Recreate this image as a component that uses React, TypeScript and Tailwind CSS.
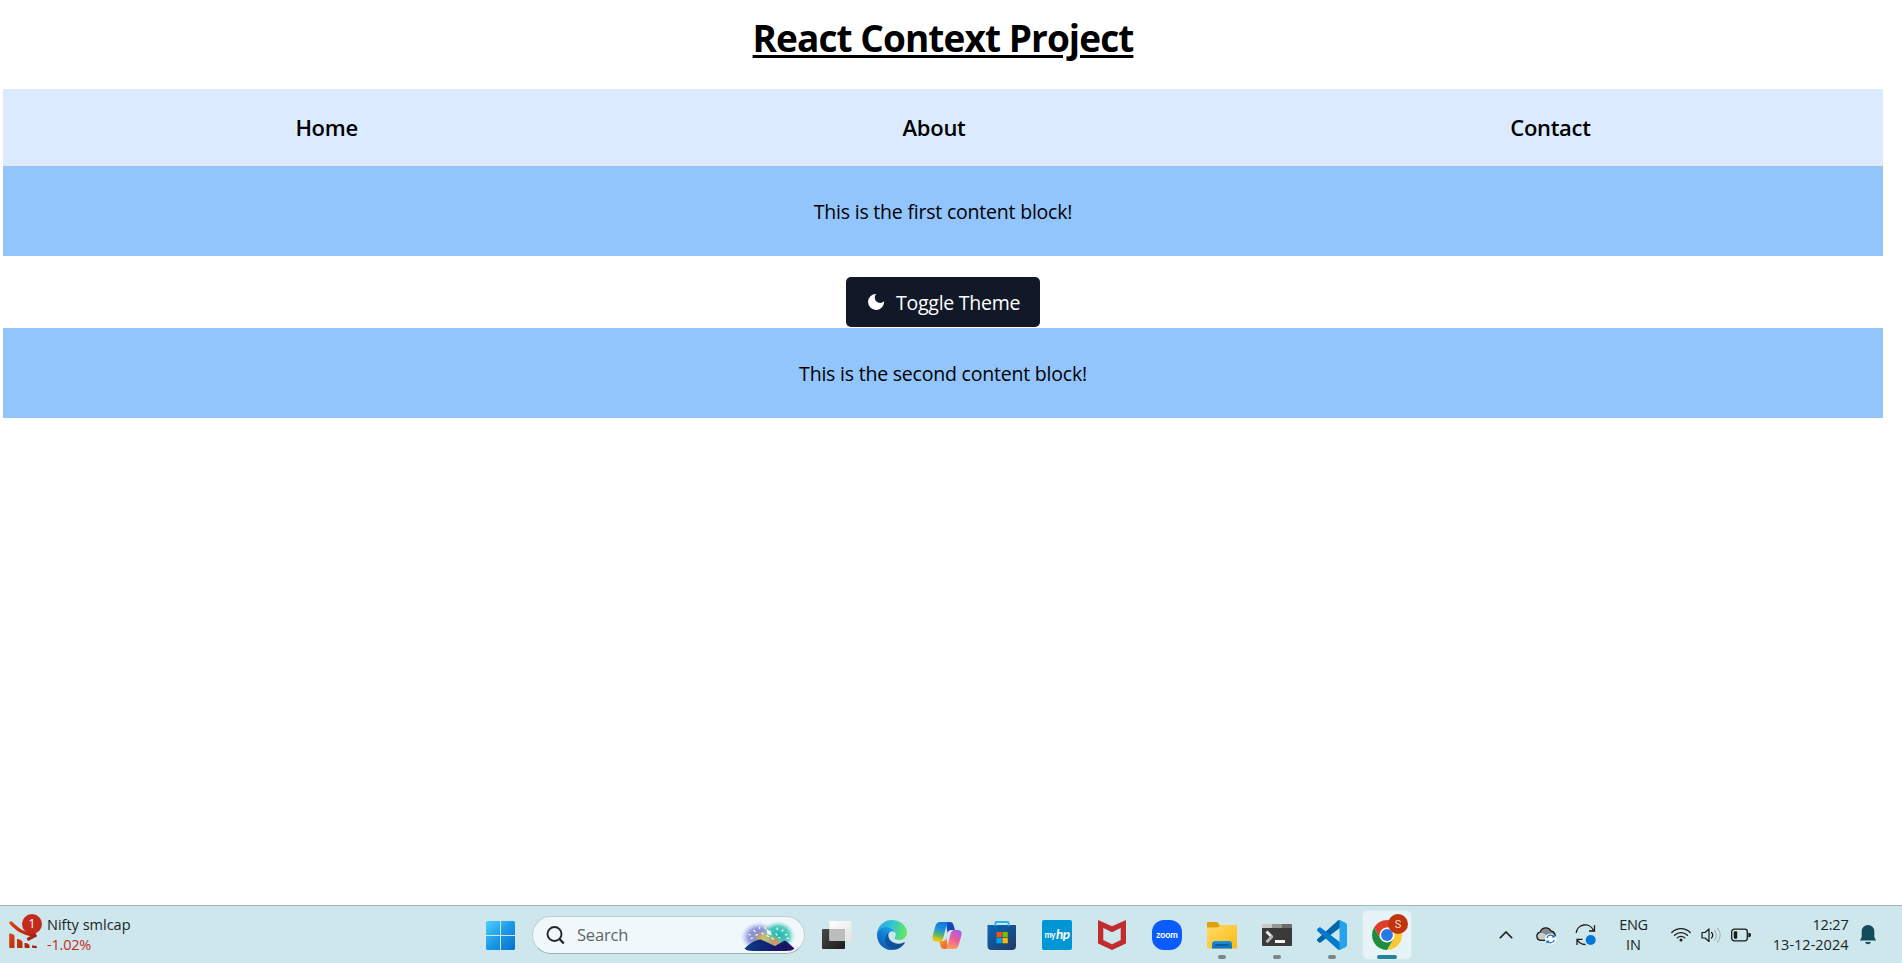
import type { ReactNode } from "react";

const NAV = ["Home", "About", "Contact"];

function ContentBlock({ children }: { children: ReactNode }) {
  return (
    <div className="flex h-[90px] items-center justify-center bg-[#93c5fd] pt-px text-[19.500px] leading-[30px] tracking-[-0.210px] text-black">
      {children}
    </div>
  );
}

function MoonIcon() {
  return (
    <svg width="16" height="16" viewBox="0 0 16 16">
      <path d="M8.200 0A8 8 0 1 0 16 7.300 5.300 5.300 0 0 1 8.200 0z" fill="currentColor" />
    </svg>
  );
}

function TrendIcon() {
  return (
    <svg width="30" height="32" viewBox="0 0 30 32">
      <defs>
        <linearGradient id="trend" x1="0" y1="0" x2="1" y2="0.6">
          <stop offset="0" stopColor="#e0420c" />
          <stop offset="1" stopColor="#a5240f" />
        </linearGradient>
      </defs>
      <path d="M2 4C9 11 14 14.500 25 16.300M19.500 20l6.500-3.500L23 11" fill="none" stroke="url(#trend)" strokeWidth="3.200" strokeLinecap="round" />
      <path d="M.2 14.500q2.800-.5 5.300 2V29H1.200q-1 0-1-1zM8 20q3-.5 5.500 2.500V29H9q-1 0-1-1zM15.500 24q3-.5 5 2V29h-4q-1 0-1-1zM23 26.500q3-.5 5 1V29h-4q-1 0-1-1z" fill="url(#trend)" />
    </svg>
  );
}

function StartIcon() {
  return (
    <svg width="29" height="29" viewBox="0 0 29 29">
      <defs>
        <linearGradient id="start" x1="0" y1="0" x2="1" y2="1">
          <stop offset="0" stopColor="#4fd0fb" />
          <stop offset="0.5" stopColor="#1b9ae6" />
          <stop offset="1" stopColor="#0670cf" />
        </linearGradient>
      </defs>
      <path d="M1 0h13v14H0V1zM15 0h13l1 1v13H15zM0 15h14v14H1l-1-1zM15 15h14v13l-1 1H15z" fill="url(#start)" />
    </svg>
  );
}

function SearchArt() {
  return (
    <svg width="56" height="34" viewBox="0 0 56 34">
      <defs>
        <radialGradient id="glowA">
          <stop offset="0" stopColor="#5f70d0" />
          <stop offset="0.6" stopColor="#858ad9" stopOpacity="0.85" />
          <stop offset="1" stopColor="#a9b3e6" stopOpacity="0" />
        </radialGradient>
        <radialGradient id="glowB">
          <stop offset="0" stopColor="#12b5ab" />
          <stop offset="0.65" stopColor="#35c4b6" stopOpacity="0.85" />
          <stop offset="1" stopColor="#8adfd2" stopOpacity="0" />
        </radialGradient>
        <radialGradient id="glowC">
          <stop offset="0" stopColor="#ff7a4a" />
          <stop offset="1" stopColor="#f0b860" stopOpacity="0" />
        </radialGradient>
        <radialGradient id="glowD">
          <stop offset="0" stopColor="#e6c04a" />
          <stop offset="1" stopColor="#e0c070" stopOpacity="0" />
        </radialGradient>
        <linearGradient id="hill" x1="0" y1="0" x2="1" y2="0">
          <stop offset="0" stopColor="#083f86" />
          <stop offset="0.6" stopColor="#17186c" />
          <stop offset="1" stopColor="#22105f" />
        </linearGradient>
      </defs>
      <ellipse cx="19" cy="19" rx="18" ry="15" fill="url(#glowA)" />
      <ellipse cx="38" cy="18" rx="17" ry="15" fill="url(#glowB)" />
      <ellipse cx="23" cy="20" rx="12" ry="8" fill="url(#glowD)" />
      <ellipse cx="34" cy="24" rx="9" ry="7" fill="url(#glowC)" />
      <path d="M4.500 30.500Q8 27 12 24.500q3-2 5.500-2.500 3-1.300 5 .3l12.500 5.700 8-4.500q2-1.500 3.500 0l8 7q-2 2.500-9 2.500H13q-6.500 0-8.500-2.500z" fill="url(#hill)" />
      <path d="M9 16.500l1.500.5M14 12.500l1 1M19.500 9.500v1.200M25 9l.4 1.500M11 20.500l1.500-.5M16 17l1.500-.4M27 12l1.500 2 2.500 2.500M32 20l1.500 1M37.500 10l-.5 1.500M43 12l-1 1M47 16.500l-1.500.3M48.500 20.500l-1.500-.4M40 20l-1-.6M27 17.500l1.500 1M36 16l1 1M22 15l1 1" fill="none" stroke="#fdf6e0" strokeWidth="1.300" strokeLinecap="round" />
      <circle cx="29" cy="14.500" r="2.200" fill="#fff" opacity=".75" />
    </svg>
  );
}

function TaskViewIcon() {
  return (
    <svg width="30" height="30" viewBox="0 0 30 30">
      <defs>
        <linearGradient id="tvDark" x1="0" y1="0" x2="1" y2="1">
          <stop offset="0" stopColor="#4a4a4a" />
          <stop offset="1" stopColor="#1c1c1c" />
        </linearGradient>
        <linearGradient id="tvLight" x1="0" y1="0" x2="1" y2="1">
          <stop offset="0" stopColor="#fff" />
          <stop offset="1" stopColor="#e2e2e2" />
        </linearGradient>
      </defs>
      <rect x="0" y="9" width="23" height="20" rx="1" fill="url(#tvDark)" />
      <rect x="7.500" y="1" width="22" height="20" rx="1" fill="url(#tvLight)" />
      <path d="M7.500 9H23v12H8.500q-1 0-1-1z" fill="#bdbdbd" />
    </svg>
  );
}

function EdgeIcon() {
  return (
    <svg width="30" height="30" viewBox="0 0 256 256">
      <defs>
        <linearGradient id="edgeA" x1="63" y1="178" x2="242" y2="178" gradientUnits="userSpaceOnUse">
          <stop offset="0" stopColor="#0c59a4" />
          <stop offset="1" stopColor="#114a8b" />
        </linearGradient>
        <linearGradient id="edgeB" x1="137" y1="101" x2="40" y2="220" gradientUnits="userSpaceOnUse">
          <stop offset="0" stopColor="#1b9de2" />
          <stop offset="0.5" stopColor="#0e7fd2" />
          <stop offset="1" stopColor="#0f62b8" />
        </linearGradient>
        <linearGradient id="edgeC" x1="10" y1="60" x2="250" y2="110" gradientUnits="userSpaceOnUse">
          <stop offset="0" stopColor="#2aa8e0" />
          <stop offset="0.45" stopColor="#32c4d4" />
          <stop offset="1" stopColor="#66e95a" />
        </linearGradient>
      </defs>
      <path d="M231 190.500c-3.400 1.800-6.900 3.400-10.500 4.700a101 101 0 0 1-35.800 6.400c-47.200 0-88.300-32.400-88.300-74.200a31.500 31.500 0 0 1 16.400-27.300c-42.700 1.800-53.700 46.300-53.700 72.400 0 73.900 68 81.400 82.700 81.400 7.900 0 19.800-2.300 27-4.600l1.300-.4a128.300 128.300 0 0 0 66.600-52.800 4 4 0 0 0-5.700-5.600z" fill="url(#edgeA)" />
      <path d="M105.700 241.400a79.200 79.200 0 0 1-22.700-21.300 80.700 80.700 0 0 1 29.800-120c3.100-1.500 8.400-4.100 15.500-4a32.400 32.400 0 0 1 25.700 13c-8-33-47-54-82-54C34 55.100 0 88 0 127.500a130 130 0 0 0 12.100 56 128 128 0 0 0 156.400 67.100 75.900 75.900 0 0 1-62.800-9.200z" fill="url(#edgeB)" />
      <path d="M152.300 148.900c-.9 1-3.400 2.500-3.400 5.600 0 2.600 1.700 5.200 4.800 7.300 14.400 10.100 41.700 8.700 41.800 8.700a59.800 59.800 0 0 0 30.300-8.400A61.400 61.400 0 0 0 256 109.300c.3-22.400-8-37.300-11.300-43.900C223.500 23.900 177.700 0 128 0A128 128 0 0 0 0 126.200c.5-36.500 36.800-66 80-66 3.500 0 23.500.3 42 10a72.600 72.600 0 0 1 30.900 29.300c6.100 10.600 7.200 24.100 7.200 29.500s-2.700 13.300-7.800 19.900z" fill="url(#edgeC)" />
    </svg>
  );
}

function CopilotIcon() {
  return (
    <svg width="30" height="29" viewBox="0 0 32 29" preserveAspectRatio="none">
      <defs>
        <linearGradient id="cpA" x1="0.500" y1="0" x2="0.300" y2="1">
          <stop offset="0" stopColor="#0a78e0" />
          <stop offset="0.4" stopColor="#2396d8" />
          <stop offset="0.65" stopColor="#58b665" />
          <stop offset="0.95" stopColor="#f0c808" />
        </linearGradient>
        <linearGradient id="cpB" x1="0.700" y1="0" x2="0.300" y2="1">
          <stop offset="0" stopColor="#a95cf0" />
          <stop offset="0.45" stopColor="#ee5a9c" />
          <stop offset="1" stopColor="#ffa353" />
        </linearGradient>
        <linearGradient id="cpC" x1="0" y1="0" x2="1" y2="1">
          <stop offset="0" stopColor="#0d50c8" />
          <stop offset="1" stopColor="#1b3fa8" />
        </linearGradient>
        <linearGradient id="cpD" x1="0" y1="0" x2="1" y2="1">
          <stop offset="0" stopColor="#f7b21c" />
          <stop offset="1" stopColor="#ee4f4a" />
        </linearGradient>
      </defs>
      <path d="M15 1h4.500q2.500 0 3.300 2.500L24.500 9H20q-2.500 0-3.500 3z" fill="url(#cpC)" />
      <path d="M17 28h-4.500q-2.500 0-3.300-2.500L7.500 20H12q2.500 0 3.500-3z" fill="url(#cpD)" />
      <path d="M8.500 1H18q-1.700.7-2.500 3.500L12 17q-.9 3.400-4 3.400H4.500q-5 0-3.800-5.400L3.600 5Q5 1 8.500 1z" fill="url(#cpA)" />
      <path d="M23.500 28H14q1.700-.7 2.500-3.500L20 12.500Q20.900 9 24 9h3.500q5 0 3.800 5.400L28.400 24Q27 28 23.500 28z" fill="url(#cpB)" />
    </svg>
  );
}

function StoreIcon() {
  return (
    <svg width="30" height="30" viewBox="0 0 30 30">
      <defs>
        <linearGradient id="store" x1="0" y1="0" x2="1" y2="1">
          <stop offset="0" stopColor="#0669bd" />
          <stop offset="1" stopColor="#26375f" />
        </linearGradient>
      </defs>
      <path d="M1 5h27.500q.5 0 .5.500V26q0 4-4 4H4.500q-4 0-4-4V5.500q0-.5.500-.5z" fill="url(#store)" />
      <path d="M8.500 6V2.800q0-.8.800-.8h11.400q.8 0 .8.800V6" fill="none" stroke="#1fb4ee" strokeWidth="1.800" />
      <path d="M9.500 12h5.300v5.300H9.500z" fill="#f25022" />
      <path d="M15.500 12h5.300v5.300h-5.300z" fill="#7fba00" />
      <path d="M9.500 18h5.300v5.300H9.500z" fill="#00a4ef" />
      <path d="M15.500 18h5.300v5.300h-5.300z" fill="#ffb900" />
    </svg>
  );
}

function MyHpIcon() {
  return (
    <div className="flex size-[30px] items-center justify-center rounded-[2px] bg-[#0096d6] font-['Lato'] leading-none text-white">
      <span className="text-[8.500px] font-bold tracking-[-0.500px]">my</span>
      <span className="-mt-px ml-px text-[13.500px] font-bold italic tracking-[-0.600px]">hp</span>
    </div>
  );
}

function McAfeeIcon() {
  return (
    <svg width="28" height="30" viewBox="0 0 28 30">
      <path d="M0 0 14 6.300 28 0V23.500L14 30 0 23.500zM5.300 8V20L14 24.200 22.700 20V8L14 12.200z" fill="#c12c30" fillRule="evenodd" />
    </svg>
  );
}

function ZoomIcon() {
  return (
    <div className="flex size-[30px] items-center justify-center rounded-[12px] bg-[#0b5cff] pb-[2px] font-['Lato'] text-[9px] font-bold leading-none tracking-[-0.1px] text-white">
      zoom
    </div>
  );
}

function FolderIcon() {
  return (
    <svg width="30" height="30" viewBox="0 0 30 30">
      <defs>
        <linearGradient id="folder" x1="0" y1="0" x2="1" y2="1">
          <stop offset="0" stopColor="#ffdc68" />
          <stop offset="1" stopColor="#fdb813" />
        </linearGradient>
        <linearGradient id="folderTab" x1="0" y1="0" x2="0" y2="1">
          <stop offset="0" stopColor="#1e94dc" />
          <stop offset="1" stopColor="#0b6cc0" />
        </linearGradient>
      </defs>
      <path d="M0 3q0-1 1-1h8.500q.8 0 1.300.6L12.500 5H29q1 0 1 1v4H0z" fill="#e0a008" />
      <path d="M0 7.500h9.500q1 0 1.800-.7L12.500 6 13.500 5H29q1 0 1 1v21.500q0 1-1 1H1q-1 0-1-1z" fill="url(#folder)" />
      <path d="M5 28.500V24q0-3 3-3h14q3 0 3 3v4.500z" fill="url(#folderTab)" />
      <path d="M8.500 24.800h13" stroke="#0a4a86" strokeWidth="1.200" strokeLinecap="round" />
    </svg>
  );
}

function TerminalIcon() {
  return (
    <svg width="30" height="30" viewBox="0 0 30 30">
      <path d="M0 8h30v17q0 1-1 1H1q-1 0-1-1z" fill="#3a3a3a" />
      <path d="M1 4h9v4H0V5q0-1 1-1z" fill="#c8c8c8" />
      <path d="M10 4h10v4H10z" fill="#969696" />
      <path d="M20 4h9q1 0 1 1v3H20z" fill="#6c6c6c" />
      <path d="m4.500 11.500 5.500 5.500" stroke="#e8e8e8" strokeWidth="3" fill="none" />
      <path d="m10.500 16-6 6.200" stroke="#b5b5b5" strokeWidth="3" fill="none" />
      <path d="M13 20h10v3H13z" fill="#f5f5f5" />
    </svg>
  );
}

function VsCodeIcon() {
  return (
    <svg width="30" height="30" viewBox="0 0 100 100">
      <path d="M96.500 10.800 75.900.9a6.200 6.200 0 0 0-7.100 1.200L1.300 63.600a4.200 4.200 0 0 0 0 6.100l5.500 5a4.200 4.200 0 0 0 5.300.3L93.300 13.400c2.700-2.100 6.600-.1 6.600 3.300v-.3a6.200 6.200 0 0 0-3.400-5.600z" fill="#0065a9" />
      <path d="M96.500 89.200 75.900 99.100a6.200 6.200 0 0 1-7.100-1.200L1.300 36.400a4.200 4.200 0 0 1 0-6.100l5.500-5a4.200 4.200 0 0 1 5.300-.3l81.200 61.600c2.700 2.100 6.600.1 6.600-3.300v.3a6.200 6.200 0 0 1-3.400 5.600z" fill="#007acc" />
      <path d="M75.900 99.100a6.200 6.200 0 0 1-7.100-1.200c2.300 2.300 6.200.7 6.200-2.600V4.700c0-3.300-3.900-4.900-6.200-2.600A6.200 6.200 0 0 1 75.900.9l20.600 9.900a6.300 6.300 0 0 1 3.500 5.600v67.200a6.300 6.300 0 0 1-3.500 5.600z" fill="#24a4ee" />
    </svg>
  );
}

function ChromeIcon() {
  return (
    <svg width="30" height="30" viewBox="0 0 48 48">
      <path d="M24 12H44.780A24 24 0 0 0 3.220 12L13.610 30z" fill="#e33b2e" />
      <path d="M34.390 30 24 48A24 24 0 0 0 44.780 12H24z" fill="#fcc934" />
      <path d="M13.610 30 3.220 12A24 24 0 0 0 24 48L34.390 30z" fill="#1e8e3e" />
      <circle cx="24" cy="24" r="12" fill="#fff" />
      <circle cx="24" cy="24" r="9.500" fill="#2a78e6" />
    </svg>
  );
}

type TaskbarApp = { name: string; icon: ReactNode; state?: "open" | "active" };

const APPS: TaskbarApp[] = [
  { name: "task-view", icon: <TaskViewIcon /> },
  { name: "edge", icon: <EdgeIcon /> },
  { name: "copilot", icon: <CopilotIcon /> },
  { name: "store", icon: <StoreIcon /> },
  { name: "myhp", icon: <MyHpIcon /> },
  { name: "mcafee", icon: <McAfeeIcon /> },
  { name: "zoom", icon: <ZoomIcon /> },
  { name: "files", icon: <FolderIcon />, state: "open" },
  { name: "terminal", icon: <TerminalIcon />, state: "open" },
  { name: "vscode", icon: <VsCodeIcon />, state: "open" },
  { name: "chrome", icon: <ChromeIcon />, state: "active" },
];

function AppButton({ app }: { app: TaskbarApp }) {
  const active = app.state === "active";
  return (
    <div className="flex w-[55px] shrink-0 justify-center">
      <div
        className={
          active
            ? "relative flex h-[48px] w-[48px] items-center justify-center rounded-[5px] bg-[#e6f3f7] shadow-[0_0_0_1px_rgba(255,255,255,0.2)]"
            : "relative flex h-[48px] w-[48px] items-center justify-center"
        }
      >
        {app.icon}
        {active && (
          <span className="absolute top-[3px] left-[25px] flex size-5 items-center justify-center rounded-full bg-[#bf360c] font-['Roboto'] text-[11px] leading-none text-[#f3d9cf]">
            S
          </span>
        )}
        {app.state === "open" && <span className="absolute bottom-0 left-5 h-1 w-2 rounded-full bg-[#7a8688]" />}
        {active && <span className="absolute bottom-0 left-[14px] h-1 w-5 rounded-full bg-[#24849a]" />}
      </div>
    </div>
  );
}

function Tray() {
  return (
    <div className="flex flex-1 items-center pl-[71px] text-[#1b2426]">
      <div className="flex w-10 justify-center">
        <svg width="14" height="8" viewBox="0 0 14 8" fill="none" stroke="#1b1b1b" strokeWidth="1.600">
          <path d="M.8 7.200 7 1l6.200 6.200" />
        </svg>
      </div>
      <div className="flex w-10 justify-center">
        <svg width="20" height="20" viewBox="0 0 20 20">
          <path d="M4.500 15.200a4 4 0 0 1-.3-7.900A5.800 5.800 0 0 1 15 6a4.600 4.600 0 0 1 3.700 6.500q-1 2.700-4.200 2.700z" fill="#85898b" stroke="#1e1e1e" strokeWidth="1.400" />
          <path d="M4.700 14.500a3.400 3.400 0 0 1-.3-6.700q2.500-.6 4.600 1.400L16 14.500z" fill="#c9cccd" />
          <circle cx="14.600" cy="14" r="5.600" fill="#fff" />
          <path d="M10.800 13.100a4 4 0 0 1 7-1.500M18.400 14.800a4 4 0 0 1-7 1.600M18.200 9.700v2.300h-2.300M11 18.300V16h2.300" fill="none" stroke="#0c6bc4" strokeWidth="1.200" />
        </svg>
      </div>
      <div className="flex w-10 justify-center pt-px">
        <svg width="21" height="22" viewBox="0 0 21 22" fill="none" stroke="#1b1b1b" strokeWidth="1.300">
          <path d="M1.200 9a9 9 0 0 1 17.200-2.700M19.500 1.300V7H14M10.500 20.500a9 9 0 0 1-8.300-5M2 21v-5.700h5.500" />
          <circle cx="15.700" cy="16" r="5" fill="#0078d7" stroke="none" />
        </svg>
      </div>
      <div className="w-14 pt-px text-center text-[14.500px] leading-5">
        <div className="tracking-[-0.3px]">ENG</div>
        <div>IN</div>
      </div>
      <div className="ml-1 flex w-[30px] justify-center">
        <svg width="20" height="15" viewBox="0 0 20 15" fill="none" stroke="#1b1b1b" strokeWidth="1.300" strokeLinecap="round">
          <path d="M.8 5.500a13 13 0 0 1 18.400 0M3.600 8.300a9 9 0 0 1 12.800 0M6.300 10.900a5.300 5.300 0 0 1 7.400 0" />
          <circle cx="10" cy="13" r="1.500" fill="#1b1b1b" stroke="none" />
        </svg>
      </div>
      <div className="flex w-[30px] justify-center">
        <svg width="20" height="16" viewBox="0 0 20 16" fill="none" strokeWidth="1.200" strokeLinecap="round">
          <path d="M1 5.500h3L8 2v12.500L4 11H1z" stroke="#1b1b1b" strokeLinejoin="round" />
          <path d="M10.500 5.500a4 4 0 0 1 0 5.500" stroke="#1b1b1b" />
          <path d="M13.500 3.500a7 7 0 0 1 0 9.500M16.500 1.200a10.500 10.500 0 0 1 0 14" stroke="#a2b5b9" />
        </svg>
      </div>
      <div className="flex w-[30px] justify-center">
        <svg width="20" height="14" viewBox="0 0 20 14">
          <rect x=".7" y="1.200" width="15.600" height="11.600" rx="2.500" fill="none" stroke="#1b1b1b" strokeWidth="1.300" />
          <rect x="2.800" y="3.300" width="3.400" height="7.400" rx="1" fill="#1b1b1b" />
          <path d="M17.300 4.700q2.700 0 2.700 2.300t-2.700 2.300z" fill="#1b1b1b" />
        </svg>
      </div>
      <div className="w-[93px] text-right text-[14.500px] leading-5 whitespace-nowrap">
        <div className="tracking-[-0.2px]">12:27</div>
        <div>13-12-2024</div>
      </div>
      <svg className="mt-px ml-[11px]" width="16" height="20" viewBox="0 0 16 20">
        <path d="M8 0a6.300 6.300 0 0 1 6.300 6.300V12L16 15.500H0L1.700 12V6.300A6.300 6.300 0 0 1 8 0zM5 17h6q-.8 2.300-3 2.300T5 17z" fill="#124b5c" />
      </svg>
    </div>
  );
}

function Taskbar() {
  return (
    <footer className="flex h-[58px] items-stretch border-t border-[#a6b5bb] bg-[#cee7ec]">
      <div className="flex w-[473px] shrink-0 items-center pl-[9px]">
        <div className="relative">
          <TrendIcon />
          <span className="absolute -top-[5px] left-[13px] flex size-5 items-center justify-center rounded-full bg-[#c42b1c] text-[13px] leading-none text-white">
            1
          </span>
        </div>
        <div className="ml-2 text-[14.500px] leading-5 text-[#1b2426]">
          <div>Nifty smlcap</div>
          <div className="tracking-[-0.200px] text-[#c42b1c]">-1.02%</div>
        </div>
      </div>
      <div className="flex w-[55px] shrink-0 items-center justify-center pt-px">
        <StartIcon />
      </div>
      <div className="flex items-center pt-px">
        <div className="mr-[5px] ml-1 flex h-[38px] w-[272.500px] items-center rounded-full border border-[#bcd0d6] border-b-[#9fb0b6] bg-[#f0f8fb] pr-2 pl-[13px]">
          <svg width="19" height="20" viewBox="0 0 19 20" fill="none" stroke="#262626" strokeWidth="1.900">
            <circle cx="8.500" cy="9" r="7" />
            <path d="m13.300 13.700 4.500 4.800" strokeWidth="2.400" />
          </svg>
          <span className="ml-3 text-[16.500px] leading-5 tracking-[-0.200px] text-[#5c6466]">Search</span>
          <span className="ml-auto">
            <SearchArt />
          </span>
        </div>
      </div>
      <div className="flex items-center pt-px">
        {APPS.map((app) => (
          <AppButton key={app.name} app={app} />
        ))}
      </div>
      <Tray />
    </footer>
  );
}

export default function App() {
  return (
    <div className="flex h-[963px] w-[1902px] flex-col overflow-hidden bg-white font-['Open_Sans','Noto_Sans',sans-serif]">
      <main className="flex-1 pr-[19px] pl-[3px]">
        <h1 className="flex h-[89px] justify-center pt-[13px] text-[37px] leading-[50px] font-bold tracking-[-0.930px] text-black">
          <span className="underline decoration-[3px] underline-offset-[3px]">React Context Project</span>
        </h1>
        <nav className="flex h-[77px] items-center justify-around border-b-2 border-[#e5e7eb] bg-[#dbeafe] px-5 text-[22px] leading-7 font-semibold tracking-[-0.300px] text-black">
          {NAV.map((item) => (
            <a key={item}>{item}</a>
          ))}
        </nav>
        <ContentBlock>
          <span>This is the first content block!</span>
        </ContentBlock>
        <div className="flex h-[72px] justify-center pt-[21px]">
          <button className="flex h-[50px] w-[194px] items-center rounded-[5px] bg-[#111827] pl-[22px] text-[19.500px] tracking-[-0.250px] text-white">
            <MoonIcon />
            <span className="ml-3 pt-px whitespace-nowrap">Toggle Theme</span>
          </button>
        </div>
        <ContentBlock>
          <span>This is the second content block!</span>
        </ContentBlock>
      </main>
      <Taskbar />
    </div>
  );
}
